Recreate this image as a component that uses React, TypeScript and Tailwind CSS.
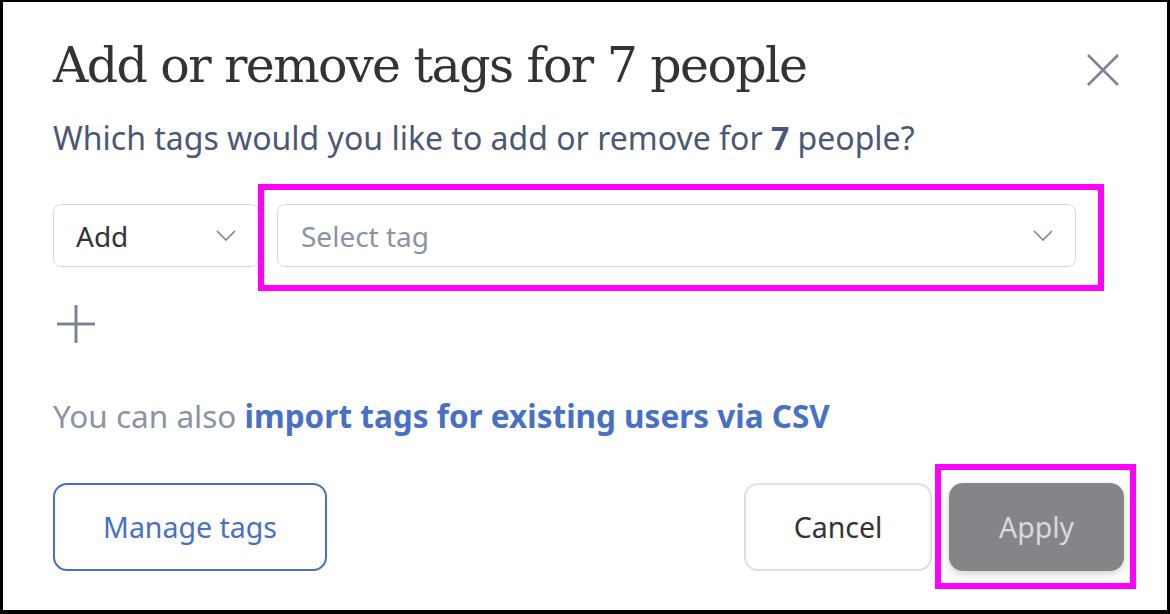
const sans = { fontFamily: '"Noto Sans", "Open Sans", sans-serif' };

function Chevron() {
  return (
    <svg width="20" height="11" viewBox="0 0 20 11" fill="none" className="shrink-0">
      <path d="M1 1l9 9 9-9" stroke="#7b8395" strokeWidth="1.6" />
    </svg>
  );
}

export default function App() {
  return (
    <div
      className="relative w-[1170px] h-[614px] bg-white border-x-[3px] border-t-[2px] border-b-[4px] border-black px-[50px] pt-[34px]"
      style={sans}
    >
      {/* Header */}
      <div className="flex items-start justify-between">
        <h1
          className="text-[49px] leading-[60px] text-[#333333] tracking-[-1.6px]"
          style={{ fontFamily: '"DejaVu Serif", "Liberation Serif", serif' }}
        >
          Add or remove tags for 7 people
        </h1>
        <button className="mt-[18px] mr-[-2px] text-[#7d8594]">
          <svg width="32" height="32" viewBox="0 0 32 32">
            <path d="M1 1l30 30M31 1L1 31" stroke="currentColor" strokeWidth="2.6" />
          </svg>
        </button>
      </div>

      <p className="mt-[22px] text-[32px] leading-[40px] text-[#4b5875]">
        Which tags would you like to add or remove for <span className="font-bold">7</span> people?
      </p>

      {/* Tag row */}
      <div className="mt-[46px] flex gap-[18px]">
        <div className="w-[206px] h-[63px] rounded-[8px] border-[1.5px] border-[#d9d9d9] flex items-center justify-between pl-[22px] pr-[22px]">
          <span className="text-[28px] text-[#333333]">Add</span>
          <Chevron />
        </div>
        <div className="w-[799px] h-[63px] rounded-[8px] border-[1.5px] border-[#d9d9d9] flex items-center justify-between pl-[23px] pr-[22px]">
          <span className="text-[28px] text-[#8a93a5]">Select tag</span>
          <Chevron />
        </div>
      </div>

      <button className="mt-[38px] ml-[4px] block text-[#7b8395]">
        <svg width="38" height="38" viewBox="0 0 38 38">
          <path d="M19 0v38M0 19h38" stroke="currentColor" strokeWidth="3" />
        </svg>
      </button>

      <p className="mt-[53px] text-[31.5px] leading-[40px] text-[#8a93a5]">
        You can also{" "}
        <a className="font-bold text-[#4870c4]">import tags for existing users via CSV</a>
      </p>

      {/* Footer */}
      <div className="mt-[47px] flex items-center">
        <button className="w-[274px] h-[88px] rounded-[14px] border-2 border-[#4870c4] text-[#4870c4] text-[28.5px]">
          Manage tags
        </button>
        <div className="ml-auto mr-[-7px] flex gap-[17px]">
          <button className="w-[188px] h-[88px] rounded-[14px] border-2 border-[#dde1e7] text-[#333333] text-[28.5px]">
            Cancel
          </button>
          <button className="w-[175px] h-[88px] rounded-[14px] bg-[#858589] text-[#d9d9db] text-[28.5px] shadow-[0_3px_8px_rgba(0,0,0,0.18)]">
            Apply
          </button>
        </div>
      </div>

      {/* annotation boxes */}
      <div className="absolute left-[255px] top-[182px] w-[846px] h-[107px] border-[6px] border-[#ff00ff] pointer-events-none" />
      <div className="absolute left-[932px] top-[462px] w-[201px] h-[125px] border-[6px] border-[#ff00ff] pointer-events-none" />
    </div>
  );
}
